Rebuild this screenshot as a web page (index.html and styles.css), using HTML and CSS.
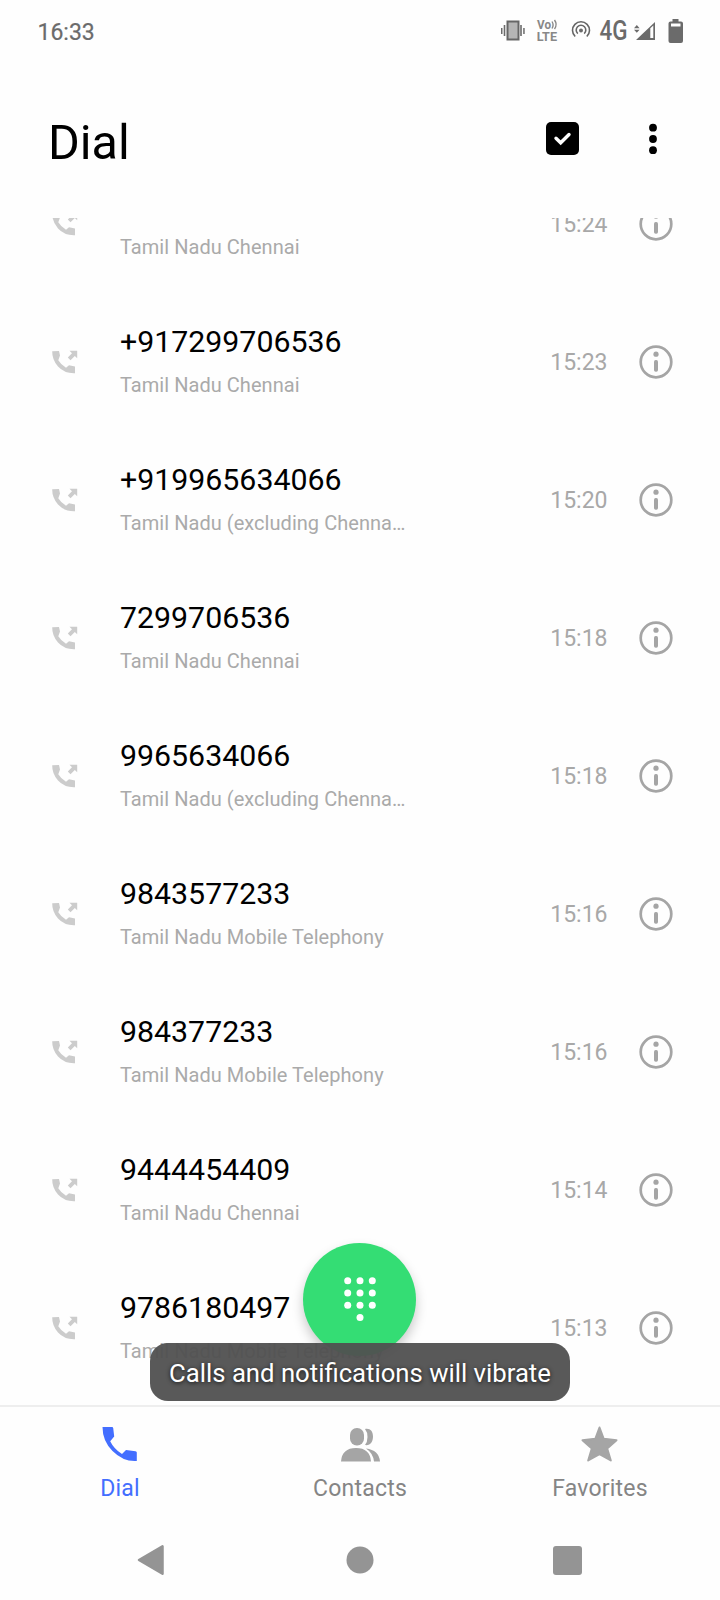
FILE: index.html
```
<!DOCTYPE html>
<html lang="en">
<head>
<meta charset="utf-8">
<title>Dial</title>
<link rel="stylesheet" href="styles.css">
</head>
<body>
<svg class="defs" width="0" height="0">
  <symbol id="outgoing" viewBox="0 0 26 24">
    <path d="M0.2 1.2 7 1 8 5.6 6.3 10.3Q9.2 15 14 17.8L17 15.2 23 16.4V23.2Q12.500 23.600 6 16.500Q0 9.500 .2 1.2Z"/>
    <path d="M17.500 .7H25.200V8.200L22.800 6 18.500 10.200 15.800 7.500 20 3.300Z"/>
  </symbol>
  <symbol id="info" viewBox="0 0 34 34">
    <circle cx="17" cy="17" r="15.3" fill="none" stroke="currentColor" stroke-width="2.7"/>
    <circle cx="17" cy="9.200" r="2.600"/>
    <rect x="15" y="15" width="4" height="11.700" rx="1.700"/>
  </symbol>
</svg>
<header class="status">
  <span class="clock">16:33</span>
  <svg class="status-icons" width="190" height="34" viewBox="495 14 190 34" fill="#666">
    <path d="M501 28h1.500v6H501zM503.700 25h1.600v11h-1.600zM523.200 28h1.500v6h-1.500zM520.200 25h1.600v11h-1.600z"/>
    <rect x="507.500" y="21.500" width="11" height="18" fill="#b5b5b5" stroke="#666" stroke-width="2"/>
    <text class="volte" x="537" y="29.200" textLength="14" lengthAdjust="spacingAndGlyphs">Vo</text>
    <text class="volte lte" x="536.700" y="41.300" textLength="20.300" lengthAdjust="spacingAndGlyphs">LTE</text>
    <g fill="none" stroke="#888" stroke-width="1.400">
      <path d="M552 21.500q2.200 3.500 0 7M554.500 20q3.200 4.500 0 9"/>
      <path d="M575.200 36.500A8.500 8.500 0 1 1 586.800 36.500M577.800 33.600A4.800 4.800 0 1 1 584.200 33.600" stroke="#666" stroke-width="1.600"/>
    </g>
    <circle cx="581" cy="30.500" r="2"/>
    <text class="network" x="599.500" y="40.300" textLength="28" lengthAdjust="spacingAndGlyphs">4G</text>
    <path d="M634 28.300 636.800 25 639.600 28.300ZM634 29.800 636.800 32.700 639.600 29.800Z"/>
    <path fill-rule="evenodd" d="M636 40 655 22V40ZM650.300 28.200V38H653.300V25.400Z"/>
    <path fill-rule="evenodd" d="M672.500 19h6v2.500H681a2 2 0 0 1 2 2V41a2 2 0 0 1-2 2H670.500a2 2 0 0 1-2-2V23.500a2 2 0 0 1 2-2H672.500ZM671 23.500V26.500H680.500V23.500Z"/>
  </svg>
</header>
<div class="toolbar">
  <h1 class="title">Dial</h1>
  <svg class="select" width="33" height="33" viewBox="0 0 33 33"><rect width="33" height="33" rx="5"/><path d="M10 16.200 14.700 20.800 23 12.500" fill="none" stroke="#fff" stroke-width="3.400" stroke-linecap="round" stroke-linejoin="miter"/></svg>
  <svg class="more" width="8" height="32" viewBox="0 0 8 32"><circle cx="4" cy="4.700" r="3.900"/><circle cx="4" cy="16" r="3.900"/><circle cx="4" cy="27.200" r="3.900"/></svg>
</div>
<main class="calls">
  <div class="call"><svg class="out"><use href="#outgoing"/></svg><div class="who"><div class="number">7299706536</div><div class="place">Tamil Nadu Chennai</div></div><time class="time">15:24</time><svg class="info"><use href="#info"/></svg></div>
  <div class="call"><svg class="out"><use href="#outgoing"/></svg><div class="who"><div class="number">+917299706536</div><div class="place">Tamil Nadu Chennai</div></div><time class="time">15:23</time><svg class="info"><use href="#info"/></svg></div>
  <div class="call"><svg class="out"><use href="#outgoing"/></svg><div class="who"><div class="number">+919965634066</div><div class="place">Tamil Nadu (excluding Chenna…</div></div><time class="time">15:20</time><svg class="info"><use href="#info"/></svg></div>
  <div class="call"><svg class="out"><use href="#outgoing"/></svg><div class="who"><div class="number">7299706536</div><div class="place">Tamil Nadu Chennai</div></div><time class="time">15:18</time><svg class="info"><use href="#info"/></svg></div>
  <div class="call"><svg class="out"><use href="#outgoing"/></svg><div class="who"><div class="number">9965634066</div><div class="place">Tamil Nadu (excluding Chenna…</div></div><time class="time">15:18</time><svg class="info"><use href="#info"/></svg></div>
  <div class="call"><svg class="out"><use href="#outgoing"/></svg><div class="who"><div class="number">9843577233</div><div class="place">Tamil Nadu Mobile Telephony</div></div><time class="time">15:16</time><svg class="info"><use href="#info"/></svg></div>
  <div class="call"><svg class="out"><use href="#outgoing"/></svg><div class="who"><div class="number">984377233</div><div class="place">Tamil Nadu Mobile Telephony</div></div><time class="time">15:16</time><svg class="info"><use href="#info"/></svg></div>
  <div class="call"><svg class="out"><use href="#outgoing"/></svg><div class="who"><div class="number">9444454409</div><div class="place">Tamil Nadu Chennai</div></div><time class="time">15:14</time><svg class="info"><use href="#info"/></svg></div>
  <div class="call"><svg class="out"><use href="#outgoing"/></svg><div class="who"><div class="number">9786180497</div><div class="place">Tamil Nadu Mobile Telephony</div></div><time class="time">15:13</time><svg class="info"><use href="#info"/></svg></div>
</main>
<nav class="tabs">
  <div class="tab active">
    <svg width="40" height="40" viewBox="0 0 40 40"><path d="M2.500 3H12Q13.100 3 13.200 4L14.200 12.500 10.200 17.200Q14 25 22 30L26 25.900 35.500 27.200Q36.800 27.400 36.800 28.500V37Q23.500 38 12.500 27Q2.500 17 2.500 3Z"/></svg>
    <span>Dial</span>
  </div>
  <div class="tab">
    <svg width="40" height="40" viewBox="0 0 40 40"><rect x="10" y="4" width="14" height="17.500" rx="6.800"/><path d="M25 5C30 4 33 7 33 12.500S30 22 25 21Q27.500 18 27.500 13T25 5Z"/><path d="M1 37.500Q2 24 16 24T31 37.500ZM26 24.500Q39 26 40 37.500H34Q33 29 26 24.500Z"/></svg>
    <span>Contacts</span>
  </div>
  <div class="tab">
    <svg width="40" height="40" viewBox="0 0 40 40"><path d="M19.500 3.500 23.700 14.800 36.500 16.200 27.200 24.500 30.800 36.500 19.500 30.200 8.200 36.500 11.800 24.500 2.500 16.200 15.300 14.800Z" stroke="currentColor" stroke-width="2" stroke-linejoin="round"/></svg>
    <span>Favorites</span>
  </div>
</nav>
<footer class="system">
  <svg width="28" height="32" viewBox="0 0 28 32"><path d="M2 16 25.500 2.300V29.700Z" stroke="currentColor" stroke-width="2.500" stroke-linejoin="round"/></svg>
  <svg class="home" width="28" height="28" viewBox="0 0 28 28"><circle cx="14" cy="14" r="13.500"/></svg>
  <svg width="29" height="29" viewBox="0 0 29 29"><rect width="29" height="29" rx="3"/></svg>
</footer>
<div class="fab">
  <svg width="32" height="44" viewBox="0 0 32 44"><circle cx="3.700" cy="3.700" r="3.500"/><circle cx="16" cy="3.700" r="3.500"/><circle cx="28.300" cy="3.700" r="3.500"/><circle cx="3.700" cy="16" r="3.500"/><circle cx="16" cy="16" r="3.500"/><circle cx="28.300" cy="16" r="3.500"/><circle cx="3.700" cy="28.200" r="3.500"/><circle cx="16" cy="28.200" r="3.500"/><circle cx="28.300" cy="28.200" r="3.500"/><circle cx="16" cy="40.400" r="3.500"/></svg>
</div>
<div class="toast">Calls and notifications will vibrate</div>
</body>
</html>
```
FILE: styles.css
```
* { box-sizing: border-box; }
body {
  position: relative;
  display: flex;
  flex-direction: column;
  width: 720px;
  height: 1600px;
  margin: 0;
  overflow: hidden;
  background: #fefefe;
  color: #000;
  font-family: Roboto, sans-serif;
}
svg { display: block; flex: none; fill: currentColor; }
.defs { position: absolute; }
.status {
  display: flex;
  align-items: center;
  justify-content: space-between;
  height: 62px;
  padding: 0 35px 0 37.500px;
  color: #6b6b6b;
}
.clock { padding-top: 3px; font-size: 23px; -webkit-text-stroke: .2px; }
.volte { font-size: 12px; font-weight: 700; fill: #888; }
.lte { font-size: 13.500px; }
.network { font-size: 28px; font-weight: 500; }
.toolbar {
  display: flex;
  align-items: center;
  height: 156px;
  padding: 0 63px 3px 48px;
}
.title { flex: 1; margin: 8.500px 0 0; font-size: 48.500px; font-weight: 400; line-height: 56px; }
.select { margin-right: 70px; }
.more { margin-top: 1px; }
.calls {
  height: 1187px;
  overflow: hidden;
}
.call {
  display: flex;
  align-items: center;
  height: 138px;
  padding: 0 47px 0 52px;
}
.call:first-child { margin-top: -63px; }
.out { width: 26px; height: 24px; margin-top: -1px; color: #ccc; }
.who { flex: 1; margin-left: 42px; padding-bottom: 4px; }
.number { font-size: 30.300px; line-height: 36px; }
.place { margin-top: 13px; font-size: 20px; line-height: 24px; letter-spacing: .04px; color: #aaa; }
.time { margin-right: 31.500px; padding-top: 1px; font-size: 23px; color: #a8a8a8; }
.info { width: 34px; height: 34px; margin-top: -1px; color: #a5a5a5; }
.tabs {
  display: flex;
  height: 114px;
  border-top: 2px solid #eee;
}
.tab {
  flex: 1;
  display: flex;
  flex-direction: column;
  align-items: center;
  padding-top: 17px;
  color: #a5a5a5;
}
.tab span { margin-top: 10px; font-size: 23px; line-height: 30px; letter-spacing: .22px; color: #858585; }
.tab.active, .tab.active span { color: #436eff; }
.system {
  display: flex;
  justify-content: space-between;
  align-items: center;
  height: 81px;
  padding: 1px 138px 0 137px;
  color: #949494;
}
.home { margin-left: 2px; }
.fab {
  position: absolute;
  left: 303px;
  top: 1243px;
  display: grid;
  place-items: center;
  width: 113px;
  height: 113px;
  padding-bottom: 1px;
  border-radius: 50%;
  background: #34dd74;
  color: #fff;
  box-shadow: 0 6px 12px rgba(0, 0, 0, .22);
}
.toast {
  position: absolute;
  left: 150px;
  top: 1343px;
  width: 420px;
  height: 58px;
  border-radius: 18px;
  background: rgba(80, 80, 80, .95);
  color: #fff;
  font-size: 25.700px;
  line-height: 60px;
  text-align: center;
  white-space: nowrap;
  text-shadow: 0 1px 4px rgba(0, 0, 0, .8);
}
```
